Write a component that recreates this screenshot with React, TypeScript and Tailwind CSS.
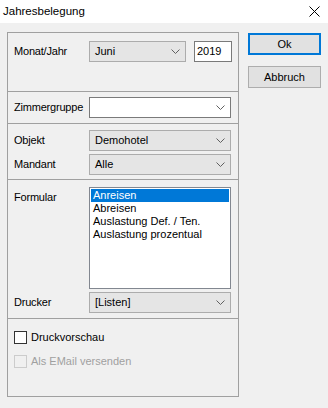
import React from "react";

const font = { fontFamily: '"Liberation Sans", Arial, sans-serif' };

function Chevron() {
  return (
    <svg width="9" height="5" viewBox="0 0 9 5" className="shrink-0">
      <path d="M0.5 0.5 L4.5 4.5 L8.5 0.5" fill="none" stroke="#606060" strokeWidth="1" />
    </svg>
  );
}

function Combo({ value, white, w }: { value: string; white?: boolean; w: string }) {
  return (
    <div
      className={`${w} h-[21px] flex items-center justify-between pl-[5px] pr-[5px] border ${
        white ? "bg-white border-[#7a7a7a]" : "bg-[#e5e5e5] border-[#acacac]"
      }`}
    >
      <span className="text-[11px] text-black leading-none">{value}</span>
      <Chevron />
    </div>
  );
}

function Label({ children }: { children: React.ReactNode }) {
  return <div className="w-[75px] shrink-0 text-[11px] text-black leading-none tracking-[-0.2px]">{children}</div>;
}

function Sep() {
  return <div className="h-px bg-[#a0a0a0]" />;
}

export default function App() {
  return (
    <div className="w-[328px] h-[408px] bg-[#f0f0f0] flex flex-col select-none" style={font}>
      {/* Title bar */}
      <div className="h-[23px] bg-white flex items-center justify-between pl-[3px] pr-[8px] shrink-0">
        <span className="text-[11.5px] text-black">Jahresbelegung</span>
        <svg width="11" height="11" viewBox="0 0 11 11">
          <path d="M0.5 0.5 L10.5 10.5 M10.5 0.5 L0.5 10.5" stroke="#000" strokeWidth="1" />
        </svg>
      </div>

      <div className="flex pl-[7px] pt-[9px] gap-[9px]">
        {/* Main panel */}
        <div className="w-[232px] h-[365px] border border-[#a0a0a0] flex flex-col">
          {/* Section 1 */}
          <div className="h-[58px] pt-[8px] px-[6px] flex items-start">
            <div className="h-[21px] flex items-center">
              <Label>Monat/Jahr</Label>
            </div>
            <Combo value="Juni" w="w-[97px]" />
            <div className="ml-[8px] w-[38px] h-[21px] bg-white border border-[#7a7a7a] flex items-center pl-[2px]">
              <span className="text-[11px] text-black leading-none">2019</span>
            </div>
          </div>
          <Sep />
          {/* Section 2 */}
          <div className="h-[31px] pt-[5px] px-[6px] flex items-start">
            <div className="h-[21px] flex items-center">
              <Label>Zimmergruppe</Label>
            </div>
            <Combo value="" white w="w-[142px]" />
          </div>
          <Sep />
          {/* Section 3 */}
          <div className="h-[55px] pt-[6px] px-[6px] flex flex-col gap-[3px]">
            <div className="flex items-center">
              <Label>Objekt</Label>
              <Combo value="Demohotel" w="w-[142px]" />
            </div>
            <div className="flex items-center">
              <Label>Mandant</Label>
              <Combo value="Alle" w="w-[142px]" />
            </div>
          </div>
          <Sep />
          {/* Section 4 */}
          <div className="h-[138px] pt-[7px] px-[6px] flex flex-col gap-[3px]">
            <div className="flex items-start">
              <div className="pt-[5px]">
                <Label>Formular</Label>
              </div>
              <div className="w-[142px] h-[102px] bg-white border border-[#828790] p-px flex flex-col">
                <div className="h-[13px] bg-[#0078d7] text-white text-[11px] leading-[13px] pl-[2px]">Anreisen</div>
                <div className="h-[13px] text-black text-[11px] leading-[13px] pl-[2px]">Abreisen</div>
                <div className="h-[13px] text-black text-[11px] leading-[13px] pl-[2px]">Auslastung Def. / Ten.</div>
                <div className="h-[13px] text-black text-[11px] leading-[13px] pl-[2px]">Auslastung prozentual</div>
              </div>
            </div>
            <div className="flex items-center">
              <Label>Drucker</Label>
              <Combo value="[Listen]" w="w-[142px]" />
            </div>
          </div>
          <Sep />
          {/* Section 5 */}
          <div className="pt-[12px] px-[6px] flex flex-col gap-[11px]">
            <div className="flex items-center gap-[4px]">
              <div className="w-[13px] h-[13px] border border-[#333333] bg-white" />
              <span className="text-[11px] text-black leading-none">Druckvorschau</span>
            </div>
            <div className="flex items-center gap-[4px]">
              <div className="w-[13px] h-[13px] border border-[#cccccc] bg-[#f0f0f0]" />
              <span className="text-[11px] text-[#a0a0a0] leading-none">Als EMail versenden</span>
            </div>
          </div>
        </div>

        {/* Buttons */}
        <div className="flex flex-col gap-[11px] pt-px">
          <div className="w-[73px] h-[22px] bg-[#e1e1e1] border-2 border-[#0078d7] flex items-center justify-center">
            <span className="text-[11px] text-black leading-none">Ok</span>
          </div>
          <div className="w-[73px] h-[22px] bg-[#e1e1e1] border border-[#adadad] flex items-center justify-center">
            <span className="text-[11px] text-black leading-none">Abbruch</span>
          </div>
        </div>
      </div>
    </div>
  );
}
